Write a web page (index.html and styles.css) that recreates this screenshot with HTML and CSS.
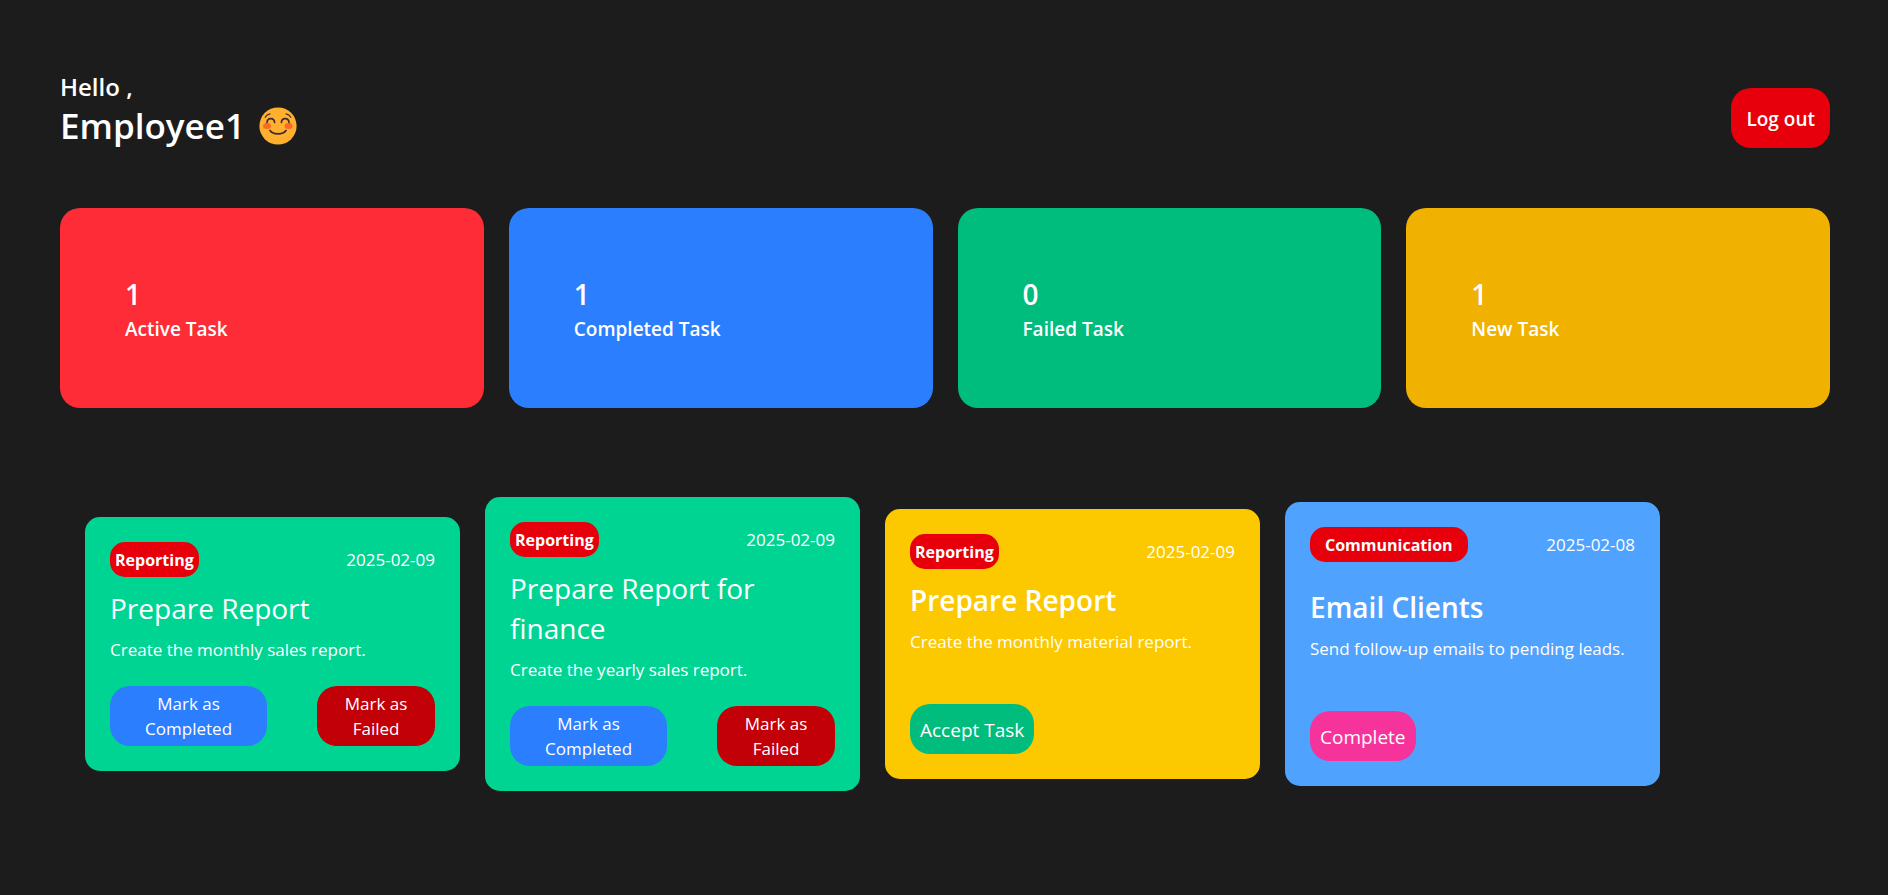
FILE: index.html
```html
<!DOCTYPE html>
<html lang="en">
<head>
<meta charset="utf-8">
<meta name="viewport" content="width=device-width, initial-scale=1">
<title>Employee Dashboard</title>
<link rel="stylesheet" href="styles.css">
</head>
<body>
<div class="page">
  <header class="header">
    <h1 class="greeting">Hello ,
      <span class="greeting-name">Employee1
        <svg class="smile" viewBox="0 0 38 38" role="img" aria-label="smiling face">
          <circle cx="19" cy="19" r="18.6" fill="#ffb02e"/>
          <ellipse cx="8" cy="19" rx="4" ry="3" fill="#ff6723"/>
          <ellipse cx="29.500" cy="19" rx="4" ry="3" fill="#ff6723"/>
          <g fill="none" stroke="#402a32" stroke-linecap="round">
            <path d="M8 15.500C8.300 10.300 15.300 10.300 15.600 15.500M22.400 15.500C22.700 10.300 29.700 10.300 30 15.500" stroke-width="1.700"/>
            <path d="M11 23.500C14 28 24 28 27 23.500" stroke-width="1.700"/>
            <path d="M6.200 10.300Q7.800 7.300 11 6.900M27 6.900Q30.200 7.300 31.800 10.300" stroke-width="1.200"/>
          </g>
        </svg>
      </span>
    </h1>
    <button class="logout" type="button">Log out</button>
  </header>

  <section class="stats" aria-label="Task summary">
    <div class="stat stat-active"><h2 class="stat-count">1</h2><h3 class="stat-label">Active Task</h3></div>
    <div class="stat stat-completed"><h2 class="stat-count">1</h2><h3 class="stat-label">Completed Task</h3></div>
    <div class="stat stat-failed"><h2 class="stat-count">0</h2><h3 class="stat-label">Failed Task</h3></div>
    <div class="stat stat-new"><h2 class="stat-count">1</h2><h3 class="stat-label">New Task</h3></div>
  </section>

  <main class="tasks">
    <article class="task task-active">
      <div class="task-top"><span class="tag">Reporting</span><time class="date">2025-02-09</time></div>
      <h2 class="task-title">Prepare Report</h2>
      <p class="task-text">Create the monthly sales report.</p>
      <div class="marks">
        <button class="mark mark-done" type="button">Mark as Completed</button>
        <button class="mark mark-failed" type="button">Mark as Failed</button>
      </div>
    </article>
    <article class="task task-active">
      <div class="task-top"><span class="tag">Reporting</span><time class="date">2025-02-09</time></div>
      <h2 class="task-title">Prepare Report for finance</h2>
      <p class="task-text">Create the yearly sales report.</p>
      <div class="marks">
        <button class="mark mark-done" type="button">Mark as Completed</button>
        <button class="mark mark-failed" type="button">Mark as Failed</button>
      </div>
    </article>
    <article class="task task-new">
      <div class="task-top"><span class="tag">Reporting</span><time class="date">2025-02-09</time></div>
      <h2 class="task-title">Prepare Report</h2>
      <p class="task-text">Create the monthly material report.</p>
      <button class="action action-accept" type="button">Accept Task</button>
    </article>
    <article class="task task-complete">
      <div class="task-top"><span class="tag tag-wide">Communication</span><time class="date">2025-02-08</time></div>
      <h2 class="task-title">Email Clients</h2>
      <p class="task-text">Send follow-up emails to pending leads.</p>
      <button class="action action-complete" type="button">Complete</button>
    </article>
  </main>
</div>
</body>
</html>
```

FILE: styles.css
```css
* {
  box-sizing: border-box;
  margin: 0;
}

body {
  background: #1c1c1c;
  color: #fff;
  font: 17px/25px "Segoe UI", "Open Sans", "Noto Sans", sans-serif;
}

button {
  border: 0;
  border-radius: 20px;
  color: inherit;
  font: inherit;
  cursor: pointer;
}

.page {
  padding: 69px 58px 60px 60px;
}

.header {
  display: flex;
  justify-content: space-between;
  align-items: flex-end;
}

.greeting {
  font-size: 24px;
  line-height: 35px;
  font-weight: 600;
}

.greeting-name {
  display: flex;
  align-items: center;
  gap: 14px;
  font-size: 35px;
  line-height: 44px;
}

.smile {
  width: 38px;
  height: 38px;
}

.logout {
  height: 60px;
  padding: 2px 15px 0;
  background: #e7000b;
  font-size: 19px;
  font-weight: 600;
}

.stats {
  display: grid;
  grid-template-columns: repeat(4, 1fr);
  gap: 25px;
  margin-top: 60px;
}

.stat {
  padding: 66px 65px 64px;
  border-radius: 20px;
}

.stat-count {
  font-size: 28px;
  line-height: 40px;
  font-weight: 600;
}

.stat-label {
  font-size: 19px;
  line-height: 30px;
  font-weight: 600;
}

.stat-active { background: #fd2c36; }
.stat-completed { background: #2b7fff; }
.stat-failed { background: #00bc7d; }
.stat-new { background: #f0b100; }

.tasks {
  display: flex;
  align-items: center;
  gap: 25px;
  margin-top: 89px;
  padding: 0 25px;
}

.task {
  flex: 0 0 375px;
  padding: 25px;
  border-radius: 15px;
}

.task-active { background: #00d492; }
.task-new { background: #fcc800; }
.task-complete { background: #50a2ff; }

.task-top {
  display: flex;
  justify-content: space-between;
  align-items: center;
}

.tag {
  padding: 6px 5px 4px;
  border-radius: 15px;
  background: #e7000b;
  font-size: 16px;
  font-weight: 700;
}

.tag-wide {
  padding: 6px 15px 4px;
}

.task-title {
  margin-top: 11px;
  font-size: 28px;
  line-height: 40px;
  font-weight: 600;
}

.task-active .task-title {
  font-weight: 400;
}

.task-complete .task-title {
  margin-top: 25px;
}

.task-text {
  margin-top: 9px;
}

.marks {
  display: grid;
  grid-template-columns: 4fr 3fr;
  gap: 50px;
  margin-top: 24px;
}

.mark {
  padding: 5px 20px;
}

.mark-done { background: #2b7fff; }
.mark-failed { background: #c10007; }

.action {
  height: 50px;
  margin-top: 50px;
  padding: 2px 10px 0;
  font-size: 19px;
}

.action-accept { background: #00bc7d; }
.action-complete { background: #f6339a; }
```
